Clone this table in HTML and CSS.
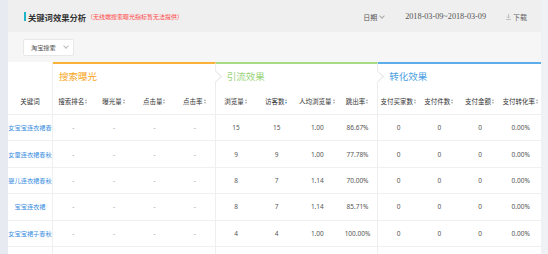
FILE: index.html
```html
<!DOCTYPE html>
<html>
<head>
  <title>关键词效果分析</title>
  <link rel="stylesheet" href="styles.css">
</head>
<body>
  <div class="main">
    <div class="head">
      <span class="bar"></span>
      <h2>关键词效果分析</h2>
      <span class="note">（无线端搜索曝光指标暂无法提供）</span>
      <div class="tools">
        <span class="date-pick">日期<i class="chev"></i></span>
        <span class="range">2018-03-09~2018-03-09</span>
        <span class="download">
          <svg width="5" height="6" viewBox="0 0 5 6"><path d="M2.5 0v4M1 2.6l1.5 1.5 1.5-1.5M0 5.5h5" fill="none" stroke="#b5b5b5" stroke-width="0.8"/></svg>下载
        </span>
      </div>
    </div>

    <div class="filter">
      <div class="select">淘宝搜索<i class="chev"></i></div>
    </div>

    <div class="report">
      <div class="row sections">
        <div class="cell kw"></div>
        <div class="sec search">搜索曝光</div>
        <div class="sec traffic arrow">引流效果</div>
        <div class="sec convert arrow">转化效果</div>
      </div>

      <div class="row cols">
        <div class="cell kw">关键词</div>
        <div class="cell">搜索排名<i class="sort"></i></div>
        <div class="cell">曝光量<i class="sort"></i></div>
        <div class="cell">点击量<i class="sort"></i></div>
        <div class="cell end">点击率<i class="sort"></i></div>
        <div class="cell">浏览量<i class="sort"></i></div>
        <div class="cell">访客数<i class="sort active"></i></div>
        <div class="cell">人均浏览量<i class="sort"></i></div>
        <div class="cell end">跳出率<i class="sort"></i></div>
        <div class="cell">支付买家数<i class="sort"></i></div>
        <div class="cell">支付件数<i class="sort"></i></div>
        <div class="cell">支付金额<i class="sort"></i></div>
        <div class="cell">支付转化率<i class="sort"></i></div>
      </div>

      <div class="row data">
        <div class="cell kw"><a href="#">女宝宝连衣裙春</a></div>
        <div class="cell dash">-</div><div class="cell dash">-</div><div class="cell dash">-</div><div class="cell dash end">-</div>
        <div class="cell">15</div><div class="cell">15</div><div class="cell">1.00</div><div class="cell end">86.67%</div>
        <div class="cell">0</div><div class="cell">0</div><div class="cell">0</div><div class="cell">0.00%</div>
      </div>
      <div class="row data">
        <div class="cell kw"><a href="#">女童连衣裙春秋</a></div>
        <div class="cell dash">-</div><div class="cell dash">-</div><div class="cell dash">-</div><div class="cell dash end">-</div>
        <div class="cell">9</div><div class="cell">9</div><div class="cell">1.00</div><div class="cell end">77.78%</div>
        <div class="cell">0</div><div class="cell">0</div><div class="cell">0</div><div class="cell">0.00%</div>
      </div>
      <div class="row data">
        <div class="cell kw"><a href="#">婴儿连衣裙春秋</a></div>
        <div class="cell dash">-</div><div class="cell dash">-</div><div class="cell dash">-</div><div class="cell dash end">-</div>
        <div class="cell">8</div><div class="cell">7</div><div class="cell">1.14</div><div class="cell end">70.00%</div>
        <div class="cell">0</div><div class="cell">0</div><div class="cell">0</div><div class="cell">0.00%</div>
      </div>
      <div class="row data">
        <div class="cell kw"><a href="#">宝宝连衣裙</a></div>
        <div class="cell dash">-</div><div class="cell dash">-</div><div class="cell dash">-</div><div class="cell dash end">-</div>
        <div class="cell">8</div><div class="cell">7</div><div class="cell">1.14</div><div class="cell end">85.71%</div>
        <div class="cell">0</div><div class="cell">0</div><div class="cell">0</div><div class="cell">0.00%</div>
      </div>
      <div class="row data">
        <div class="cell kw"><a href="#">女宝宝裙子春秋</a></div>
        <div class="cell dash">-</div><div class="cell dash">-</div><div class="cell dash">-</div><div class="cell dash end">-</div>
        <div class="cell">4</div><div class="cell">4</div><div class="cell">1.00</div><div class="cell end">100.00%</div>
        <div class="cell">0</div><div class="cell">0</div><div class="cell">0</div><div class="cell">0.00%</div>
      </div>
      <div class="row tail">
        <div class="cell kw"></div>
        <div class="cell"></div><div class="cell"></div><div class="cell"></div><div class="cell end"></div>
        <div class="cell"></div><div class="cell"></div><div class="cell"></div><div class="cell end"></div>
        <div class="cell"></div><div class="cell"></div><div class="cell"></div><div class="cell"></div>
      </div>
    </div>
  </div>
</body>
</html>
```

FILE: styles.css
```css
body {
  margin: 0;
  background: #eff1f4;
  font-family: "Noto Sans", "Noto Sans CJK SC", sans-serif;
  overflow: hidden;
}
.main {
  margin-right: 7px;
  border-left: 8px solid #e7ebf1;
  background: #fff;
}
.head {
  display: flex;
  align-items: center;
  height: 32px;
  padding: 1px 14px 0 16px;
  box-sizing: border-box;
  background: #efefef;
}
.bar {
  width: 2px;
  height: 9px;
  margin-right: 2px;
  background: #1fb3c5;
}
.head h2 {
  margin: 0;
  font-size: 8.3px;
  font-weight: bold;
  color: #333;
}
.note {
  margin-left: 1px;
  font-size: 6px;
  color: #ff4545;
}
.tools {
  display: flex;
  align-items: center;
  margin-left: auto;
}
.date-pick {
  font-size: 7px;
  color: #555;
}
.chev {
  display: inline-block;
  width: 3px;
  height: 3px;
  margin: 0 0 2px 3px;
  border-right: 0.8px solid #aaa;
  border-bottom: 0.8px solid #aaa;
  transform: rotate(45deg);
}
.range {
  margin-left: 21px;
  font-family: "Liberation Serif", serif;
  font-size: 8.2px;
  color: #555;
}
.download {
  display: flex;
  align-items: center;
  gap: 2px;
  margin-left: 20px;
  font-size: 7px;
  color: #666;
}
.filter {
  height: 30px;
  padding-left: 15px;
  display: flex;
  align-items: center;
  background: #f6f6f6;
}
.select {
  display: flex;
  align-items: center;
  box-sizing: border-box;
  width: 51px;
  height: 17px;
  padding-left: 7px;
  font-size: 6.2px;
  color: #555;
  background: #fff;
  border: 1px solid #e8e8e8;
  border-radius: 2px;
}
.select .chev {
  margin-left: 8px;
  border-color: #bbb;
}
.row {
  display: grid;
  grid-template-columns: 45px repeat(12, 1fr);
}
.cell {
  box-sizing: border-box;
  display: flex;
  align-items: center;
  justify-content: center;
  white-space: nowrap;
  overflow: hidden;
  font-size: 6.5px;
  color: #555;
}
.kw, .end {
  border-right: 1px solid #efefef;
}
.sections {
  height: 26px;
}
.sec {
  position: relative;
  box-sizing: border-box;
  grid-column: span 4;
  display: flex;
  align-items: center;
  padding: 0 0 0 11px;
  font-size: 9.5px;
  border-top: 2px solid;
}
.search {
  padding-left: 6px;
  color: #f6a623;
  border-top-color: #f9b13a;
  border-right: 1px solid #ececec;
}
.traffic {
  color: #9ad47b;
  border-top-color: #a6da83;
  border-right: 1px solid #ececec;
}
.convert {
  color: #4c9fe2;
  border-top-color: #5cade9;
}
.arrow::before {
  content: "";
  position: absolute;
  left: -5px;
  top: 8px;
  width: 8px;
  height: 8px;
  background: #fff;
  border-top: 1px solid #e6e6e6;
  border-right: 1px solid #e6e6e6;
  transform: rotate(45deg);
}
.cols {
  height: 26px;
  border-bottom: 1px solid #efefef;
}
.cols .cell {
  color: #333;
}
.sort {
  position: relative;
  display: inline-block;
  width: 3px;
  height: 5px;
  margin-left: 1px;
}
.sort::before, .sort::after {
  content: "";
  position: absolute;
  left: 0;
  border-left: 1.5px solid transparent;
  border-right: 1.5px solid transparent;
}
.sort::before {
  top: 0;
  border-bottom: 2px solid #aaa;
}
.sort::after {
  bottom: 0;
  border-top: 2px solid #aaa;
}
.sort.active::after {
  border-top-color: #3d8fe0;
}
.data {
  height: 26.4px;
  box-sizing: border-box;
  border-bottom: 1px solid #f0f0f0;
}
.tail {
  height: 8px;
}
.data .kw a {
  font-size: 6.2px;
  color: #3a8ee0;
  text-decoration: none;
}
.dash {
  color: #999;
}
```
